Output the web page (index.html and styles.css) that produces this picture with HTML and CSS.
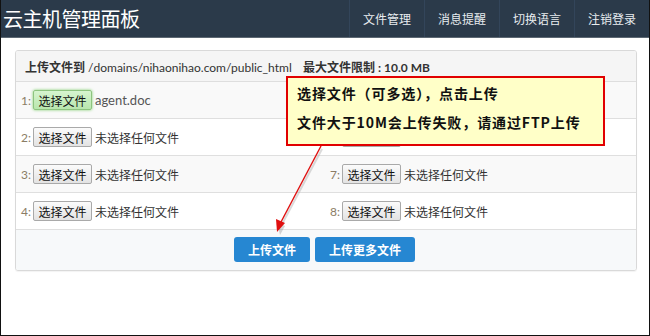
FILE: index.html
```html
<!DOCTYPE html>
<html lang="zh-CN">
<head>
<meta charset="utf-8">
<title>云主机管理面板</title>
<link rel="stylesheet" href="styles.css">
</head>
<body>
<div class="frame">
  <header class="topbar">
    <div class="brand">云主机管理面板</div>
    <nav class="nav">
      <a class="nav-item">文件管理</a>
      <a class="nav-item">消息提醒</a>
      <a class="nav-item">切换语言</a>
      <a class="nav-item">注销登录</a>
    </nav>
  </header>
  <main class="content">
    <section class="panel">
      <div class="panel-head">
        <span class="dest"><b class="cjk-b">上传文件到</b> /domains/nihaonihao.com/public_html</span>
        <span class="limit"><b class="cjk-b">最大文件限制</b> <b>: 10.0 MB</b></span>
      </div>
      <div class="rows">
        <div class="cell odd"><span class="num">1:</span><button class="pick active">选择文件</button><span class="fname latin">agent.doc</span></div>
        <div class="cell odd"><span class="num">5:</span><button class="pick">选择文件</button><span class="fname">未选择任何文件</span></div>
        <div class="cell"><span class="num">2:</span><button class="pick">选择文件</button><span class="fname">未选择任何文件</span></div>
        <div class="cell"><span class="num">6:</span><button class="pick">选择文件</button><span class="fname">未选择任何文件</span></div>
        <div class="cell odd"><span class="num">3:</span><button class="pick">选择文件</button><span class="fname">未选择任何文件</span></div>
        <div class="cell odd"><span class="num">7:</span><button class="pick">选择文件</button><span class="fname">未选择任何文件</span></div>
        <div class="cell"><span class="num">4:</span><button class="pick">选择文件</button><span class="fname">未选择任何文件</span></div>
        <div class="cell"><span class="num">8:</span><button class="pick">选择文件</button><span class="fname">未选择任何文件</span></div>
      </div>
      <div class="panel-foot">
        <button class="btn-primary w1">上传文件</button>
        <button class="btn-primary w2">上传更多文件</button>
      </div>
    </section>
  </main>
  <div class="tip">
    <p>选择文件（可多选），点击上传</p>
    <p>文件大于10M会上传失败，请通过FTP上传</p>
  </div>
  <svg class="arrow" width="650" height="336" viewBox="0 0 650 336">
    <line x1="321" y1="147" x2="280" y2="224" stroke="#999" stroke-width="2" opacity="0.35" transform="translate(1,2)"/>
    <polygon points="279,233 276,220 284,224" fill="#888" opacity="0.35" transform="translate(1,2)"/>
    <line x1="321" y1="146" x2="281" y2="222" stroke="#e01010" stroke-width="1.4"/>
    <polygon points="277,232 276,219 285,223" fill="#e01010"/>
  </svg>
</div>
</body>
</html>
```

FILE: styles.css
```css
* { box-sizing: border-box; }
html, body { margin: 0; padding: 0; background: #fff; }
body {
  font-family: Lato, "Noto Sans CJK SC", sans-serif;
  font-size: 12px;
  color: #333;
}
.frame {
  position: relative;
  width: 650px;
  height: 336px;
  border: 1px solid #111;
  border-top: none;
  overflow: hidden;
  background: #fff;
}
.topbar {
  display: flex;
  justify-content: space-between;
  height: 38px;
  background: #2b3a4a;
  border-bottom: 1px solid #5d6873;
}
.brand {
  padding-left: 2px;
  font-family: "Noto Sans CJK SC", sans-serif;
  font-size: 20px;
  line-height: 37px;
  color: #fff;
  letter-spacing: -0.5px;
}
.nav { display: flex; }
.nav-item {
  width: 75px;
  text-align: center;
  font-family: "Noto Sans CJK SC", sans-serif;
  font-size: 12px;
  line-height: 37px;
  color: #e8ecef;
  border-left: 1px solid #33455a;
}
.content { padding: 12px 12px 0 14px; }
.panel {
  border: 1px solid #d9d9d9;
  border-radius: 3px;
  box-shadow: 0 1px 1px rgba(0,0,0,0.05);
  overflow: hidden;
}
.panel-head {
  display: flex;
  height: 31px;
  align-items: center;
  padding: 0 9px;
  background: #f5f5f5;
  border-bottom: 1px solid #dedede;
  font-size: 12px;
  color: #333;
  white-space: nowrap;
}
.cjk-b {
  font-family: "Noto Sans CJK SC", sans-serif;
  font-size: 12px;
  font-weight: bold;
}
.dest { flex: none; width: 278px; }
.limit { flex: none; }
.limit b { font-weight: bold; }
.rows {
  display: grid;
  grid-template-columns: 309px 1fr;
}
.cell {
  display: flex;
  align-items: center;
  height: 37px;
  padding-left: 5px;
  border-bottom: 1px solid #dfdfdf;
  background: #fff;
}
.cell.odd { background: #f9f9f9; }
.num {
  width: 12px;
  font-size: 12px;
  color: #8b7d65;
}
.pick {
  width: 59px;
  height: 20px;
  margin: 0 3px 0 0;
  padding: 0;
  font-family: "Noto Sans CJK SC", sans-serif;
  font-size: 12px;
  color: #111;
  border: 1px solid #a9a9a9;
  border-radius: 2px;
  background: linear-gradient(#fbfbfb, #e3e3e3);
}
.pick.active {
  background: linear-gradient(#d6f5cf, #b9e6ae);
  border-color: #8dc47f;
  box-shadow: 0 0 3px #7ccd6a;
}
.fname {
  font-family: "Noto Sans CJK SC", sans-serif;
  font-size: 12px;
  color: #333;
}
.fname.latin {
  font-family: Lato, sans-serif;
  font-size: 13px;
  color: #555;
}
.panel-foot {
  display: flex;
  justify-content: center;
  gap: 5px;
  height: 40px;
  padding-top: 7px;
  padding-right: 3px;
  background: #f7f9fa;
}
.btn-primary {
  height: 25px;
  padding: 0;
  border: none;
  border-radius: 3px;
  background: #2687d2;
  color: #fff;
  font-family: "Noto Sans CJK SC", sans-serif;
  font-size: 12px;
  font-weight: bold;
}
.w1 { width: 76px; }
.w2 { width: 100px; }
.tip {
  position: absolute;
  left: 285px;
  top: 76px;
  width: 319px;
  height: 70px;
  padding: 1px 0 0 9px;
  background: #ffffc8;
  border: 2px solid #e10000;
  font-family: "Noto Sans CJK SC", sans-serif;
  font-size: 14px;
  font-weight: bold;
  color: #111;
}
.tip p { margin: 0; line-height: 29px; letter-spacing: 0.9px; }
.arrow {
  position: absolute;
  left: -1px;
  top: 0;
  pointer-events: none;
}
```
